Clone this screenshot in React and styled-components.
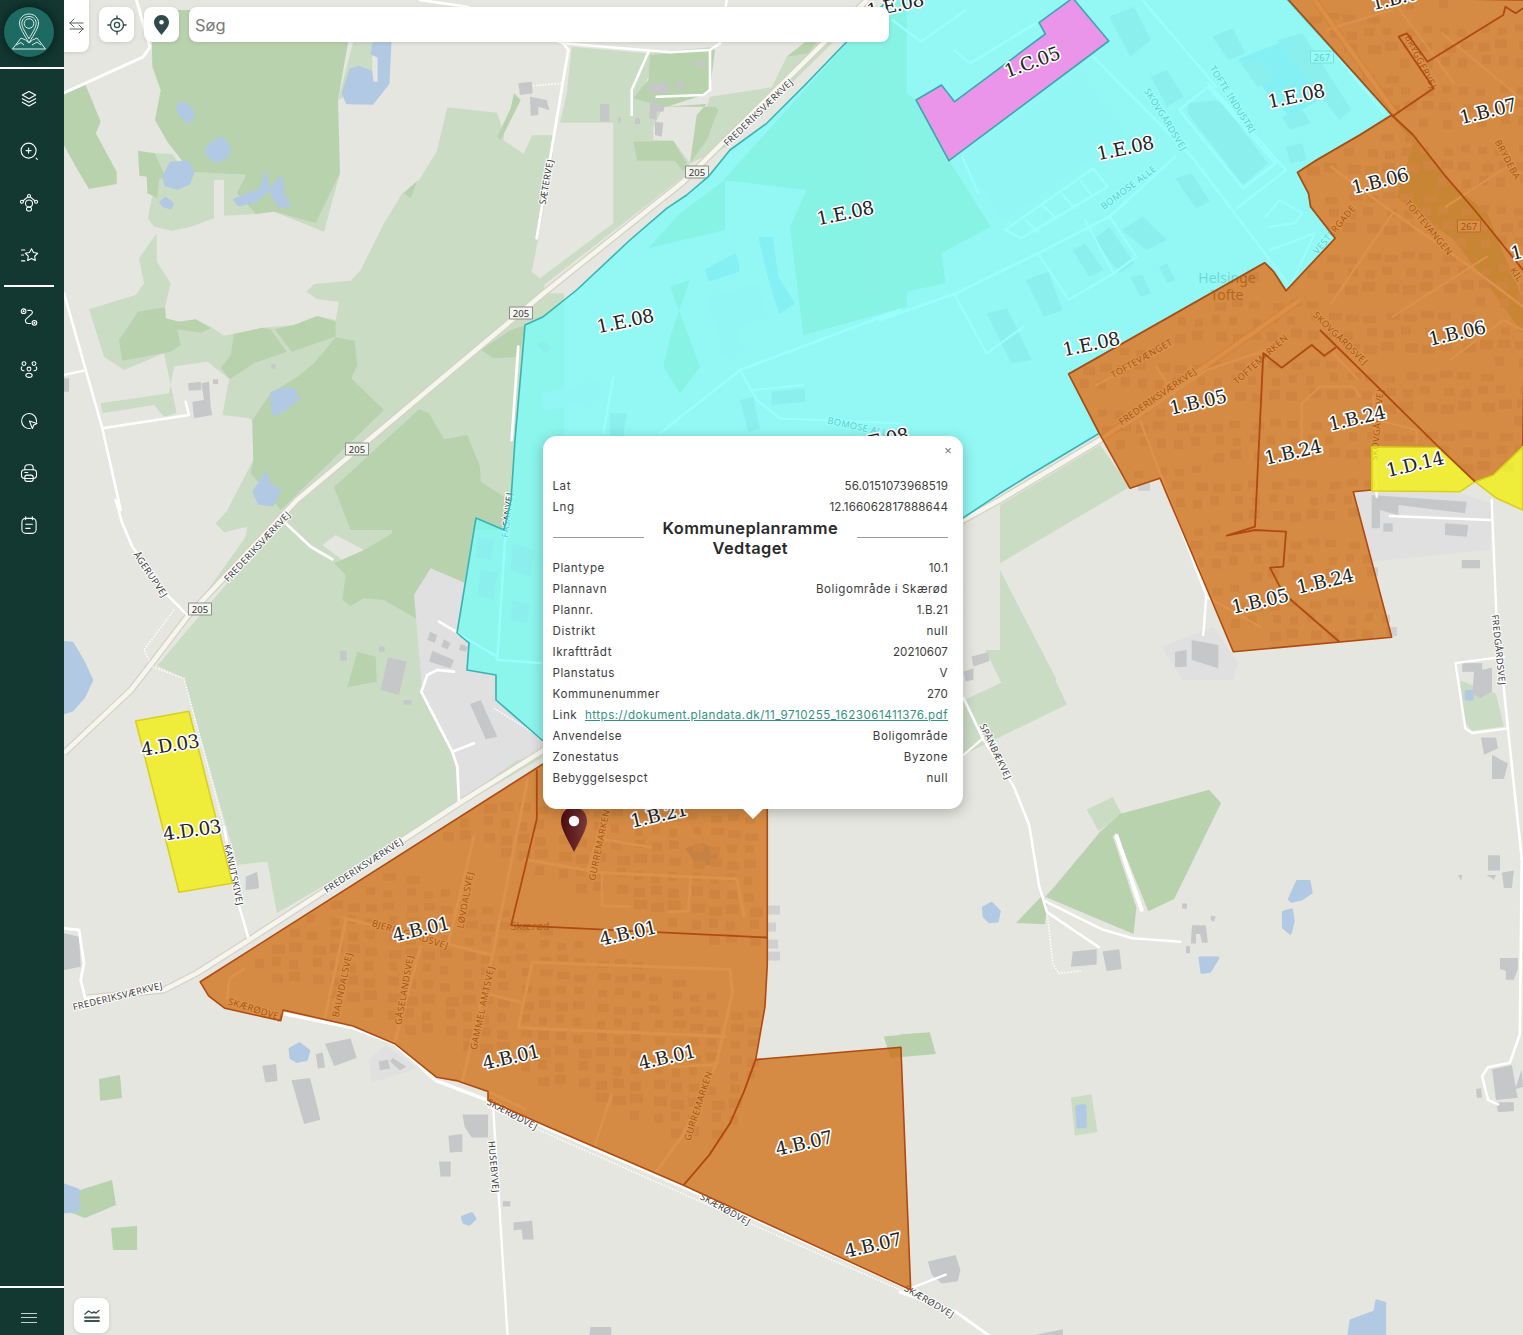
import React from "react";
import styled, { createGlobalStyle } from "styled-components";

const conv = (ox, oy, sx, sy) => (s) =>
  s.trim().split(/\s+/).map((p) => {
    const [x, y] = p.split(",").map(Number);
    return `${(ox + x * sx).toFixed(1)},${(oy + y * sy).toFixed(1)}`;
  }).join(" ");
const t = 1 / 3;
const z5 = conv(880, 0, 643 / 1568, t);
const z6 = conv(1000, 330, t, t);
const z7 = conv(400, 0, t, t);
const z8 = conv(64, 30, t, t);
const z9 = conv(64, 500, t, t);
const z10 = conv(190, 780, 730 / 1568, 555 / 1568);
const z11 = conv(900, 650, 623 / 1568, 685 / 1568);

const GlobalStyle = createGlobalStyle`
  html, body { margin: 0; padding: 0; height: 100%; background: #e5e6e0; overflow: hidden; }
  #root { height: 100%; }
  * { box-sizing: border-box; }
`;

const Shell = styled.div`
  display: flex;
  width: 100%;
  height: 1335px;
  font-family: "Inter", "Noto Sans", sans-serif;
`;
const Sidebar = styled.aside`
  flex: 0 0 64px;
  display: flex;
  flex-direction: column;
  background: #123831;
  position: relative;
  z-index: 2;
`;
const LogoBar = styled.div`
  height: 67px;
  display: flex;
  align-items: flex-start;
  padding: 7px 0 0 4px;
`;
const LogoDisc = styled.div`
  width: 50px;
  height: 50px;
  border-radius: 50%;
  background: #1c6a62;
  box-shadow: 0 0 12px rgba(0, 0, 0, 0.55);
  display: flex;
  align-items: center;
  justify-content: center;
`;
const Rule = styled.hr`
  border: 0;
  margin: 0;
  height: 2px;
  background: #fff;
  flex: none;
`;
const ShortRule = styled(Rule)`
  width: 50px;
  margin-left: 4px;
`;
const NavGroup = styled.nav`
  display: flex;
  flex-direction: column;
  padding: ${(p) => p.$pad};
`;
const NavItem = styled.button`
  width: 58px;
  height: 52px;
  border: 0;
  padding: 0;
  background: transparent;
  display: flex;
  align-items: center;
  justify-content: center;
  color: #fff;
`;
const Foot = styled.div`
  margin-top: auto;
`;
const MenuRow = styled.div`
  height: 47px;
  padding: 25px 0 0 21px;
`;
const MenuLines = styled.div`
  width: 16px;
  height: 10px;
  border-top: 1.5px solid #c6d2cf;
  border-bottom: 1.5px solid #c6d2cf;
  position: relative;
  &::after {
    content: "";
    position: absolute;
    left: 0;
    right: 0;
    top: 2.8px;
    height: 1.5px;
    background: #c6d2cf;
  }
`;
const MapArea = styled.main`
  flex: 1;
  position: relative;
  overflow: hidden;
`;
const MapCanvas = styled.svg`
  display: block;
  width: 100%;
  height: 100%;
  polygon, polyline, rect, ellipse { vector-effect: non-scaling-stroke; }
`;
const Land = styled.rect`fill: #e5e6e0;`;
const ForestLight = styled.polygon`fill: #cbdcc5;`;
const ForestDark = styled.polygon`fill: #b9d2ae;`;
const LandPatch = styled.polygon`fill: #e5e6e0;`;
const Residential = styled.polygon`fill: #e0e0e0;`;
const Water = styled.polygon`
  fill: #b2c9e3;
  stroke: #b2c9e3;
  stroke-width: 3;
  stroke-linejoin: round;
`;
const Building = styled.polygon`fill: #c6c7c9;`;
const Block = styled.rect`fill: #d0d0d2;`;
const Road = styled.polyline`
  fill: none;
  stroke: #fff;
  stroke-width: ${(p) => p.$w || 3};
  stroke-linejoin: round;
  stroke-linecap: round;
`;
const PathDots = styled.polyline`
  fill: none;
  stroke: #fff;
  stroke-width: 1.4;
  stroke-dasharray: 1.5 1.5;
`;
const MajorCase = styled.polyline`
  fill: none;
  stroke: #d3d2c5;
  stroke-width: 7;
  stroke-linejoin: round;
`;
const MajorRoad = styled.polyline`
  fill: none;
  stroke: #f7f6ee;
  stroke-width: 4.5;
  stroke-linejoin: round;
`;
const RoadName = styled.text`
  font-family: "Noto Sans", "DejaVu Sans", sans-serif;
  font-size: 9.3px;
  letter-spacing: 0.35px;
  fill: #3c3c3c;
  stroke: #fff;
  stroke-width: 2px;
  paint-order: stroke;
  text-anchor: middle;
  dominant-baseline: middle;
`;
const PlaceName = styled.text`
  font-family: "Noto Sans", "DejaVu Sans", sans-serif;
  font-size: ${(p) => p.$size || 14}px;
  fill: #6e6e6e;
  text-anchor: middle;
`;
const ShieldBox = styled.rect`
  fill: #f5f5f0;
  stroke: #8d8d8d;
  stroke-width: 1;
`;
const ShieldText = styled.text`
  font-family: "Noto Sans", "DejaVu Sans", sans-serif;
  font-size: 9.5px;
  fill: #333;
  text-anchor: middle;
  dominant-baseline: central;
`;
const ZoneFill = styled.polygon`
  fill: ${(p) => p.$fill};
  stroke: ${(p) => p.$line};
  stroke-width: 1.6;
  stroke-linejoin: round;
`;
const ZoneEdge = styled.polyline`
  fill: none;
  stroke: #b04a10;
  stroke-width: 1.8;
  stroke-linejoin: round;
`;
const ZoneName = styled.text`
  font-family: "DejaVu Serif", "Liberation Serif", serif;
  font-size: 18.5px;
  letter-spacing: -0.5px;
  fill: #222;
  stroke: #fff;
  stroke-width: 3.4px;
  stroke-linejoin: round;
  paint-order: stroke;
  text-anchor: middle;
  dominant-baseline: central;
`;
const Toolbar = styled.div`
  position: absolute;
  top: 0;
  left: 0;
  display: flex;
  align-items: flex-start;
  gap: 10px;
`;
const SwapTab = styled.button`
  width: 25px;
  height: 52px;
  border: 0;
  padding: 0;
  background: #fff;
  border-radius: 0 0 8px 0;
  box-shadow: 0 1px 4px rgba(0, 0, 0, 0.12);
  display: flex;
  align-items: center;
  justify-content: center;
  color: #54605e;
`;
const ToolButton = styled.button`
  width: 35px;
  height: 35px;
  margin-top: 7px;
  border: 0;
  padding: 0;
  background: #fff;
  border-radius: 8px;
  box-shadow: 0 1px 4px rgba(0, 0, 0, 0.12);
  display: flex;
  align-items: center;
  justify-content: center;
  color: #2f4a48;
`;
const Search = styled.input`
  width: 700px;
  height: 35px;
  margin-top: 7px;
  border: 0;
  outline: 0;
  padding: 0 6px;
  background: #fff;
  border-radius: 8px;
  box-shadow: 0 1px 4px rgba(0, 0, 0, 0.12);
  font-family: "Inter", "Noto Sans", sans-serif;
  font-size: 16.5px;
  &::placeholder { color: #7a7a7a; opacity: 1; }
`;
const LegendButton = styled(ToolButton)`
  position: absolute;
  left: 10px;
  bottom: 2px;
  margin: 0;
`;
const Pin = styled.svg`
  position: absolute;
  left: 496px;
  top: 806px;
`;
const Popup = styled.section`
  position: absolute;
  left: 478.5px;
  top: 436px;
  width: 420.5px;
  height: 373px;
  padding: 39.5px 15px 20px 10px;
  background: #fff;
  border-radius: 14px;
  box-shadow: 0 3px 14px rgba(0, 0, 0, 0.25);
  color: #3c3c3c;
  font-size: 11.6px;
  letter-spacing: 0.55px;
  &::after {
    content: "";
    position: absolute;
    left: 200px;
    bottom: -10px;
    border-left: 10px solid transparent;
    border-right: 10px solid transparent;
    border-top: 10px solid #fff;
  }
`;
const Close = styled.button`
  position: absolute;
  top: 8px;
  right: 9px;
  width: 12px;
  height: 14px;
  border: 0;
  padding: 0;
  background: none;
  color: #777;
  font: 400 13px/14px "Liberation Sans", sans-serif;
`;
const Row = styled.div`
  display: flex;
  justify-content: space-between;
  height: 21px;
  line-height: 21px;
  white-space: nowrap;
`;
const Value = styled.span`
  letter-spacing: ${(p) => (p.$num ? "0.1px" : "inherit")};
`;
const TitleRow = styled.div`
  display: grid;
  grid-template-columns: 91px 1fr 91px;
  align-items: center;
  height: 41px;
  margin-top: -0.5px;
  color: #2a2a2a;
  &::before, &::after {
    content: "";
    height: 1px;
    background: #9a9a9a;
  }
`;
const Title = styled.h3`
  margin: 0;
  font-size: 16.4px;
  line-height: 20px;
  font-weight: 600;
  letter-spacing: 0.4px;
  text-align: center;
  white-space: nowrap;
`;
const DocLink = styled.a`
  color: #34917f;
  text-decoration: underline;
  letter-spacing: 0.5px;
`;

const Icon = ({ children, size = 20, sw = 1.3 }) => (
  <svg width={size} height={size} viewBox="0 0 24 24" fill="none" stroke="currentColor" strokeWidth={sw} strokeLinecap="round" strokeLinejoin="round">
    {children}
  </svg>
);
const navTop = [
  <><path d="M12 3 20 7.3 12 11.6 4 7.3Z" /><path d="M4 11.6 12 16 20 11.6" /><path d="M4 15.8 12 20.3 20 15.8" /></>,
  <><circle cx="11.5" cy="11.5" r="9" /><path d="M11.5 8.5v6M8.5 11.5h6M20.5 20.5l1.5 1.5" /></>,
  <><circle cx="12" cy="3.5" r="1.8" /><circle cx="3.5" cy="10.5" r="1.8" /><circle cx="20.5" cy="10.5" r="1.8" /><path d="M10.6 4.6 5 9.3M13.4 4.6 19 9.3" /><circle cx="12" cy="12.5" r="4.2" /><rect x="9" y="17" width="6" height="4.5" rx="2" /></>,
  <><path d="M15 4.5l2.4 4.6 5 .8-3.6 3.6.8 5.1-4.6-2.4-4.6 2.4.8-5.1-3.6-3.6 5-.8Z" /><path d="M3 6h4M3 12h2.5M3 19h4" /></>,
];
const navBottom = [
  <><circle cx="5.5" cy="5" r="2.8" /><circle cx="5.5" cy="5" r=".6" /><circle cx="18.5" cy="19" r="2.8" /><circle cx="18.5" cy="19" r=".6" /><path d="M10.5 4h3a2.5 2.5 0 0 1 1.8 4.3L9 14a3.2 3.2 0 0 0 2 5.8h3" /></>,
  <><circle cx="6" cy="5.5" r="2.3" /><circle cx="18" cy="5.5" r="2.3" /><circle cx="12" cy="12" r="2.3" /><path d="M3.5 9.5C1.5 11.5 3 14 6 14M20.5 9.5c2 2 .5 4.5-2.500 4.500" /><ellipse cx="12" cy="19.5" rx="3.800" ry="2.500" /></>,
  <><path d="M12 3a9 9 0 1 0 1.500 17.900" /><path d="M12 3a9 9 0 0 1 9 9v1.500" /><path d="M12.500 12l9 3-3.800 1.800-1.700 4.200Z" /></>,
  <><path d="M7 8V5.500A3.500 3.500 0 0 1 10.500 2h3A3.500 3.500 0 0 1 17 5.500V8" /><rect x="3" y="8" width="18" height="10.500" rx="3.500" /><rect x="7" y="14.500" width="10" height="7.500" rx="2.500" /><path d="M7 11.300h3.500" /></>,
  <><rect x="3.500" y="4" width="17" height="18" rx="4.500" /><path d="M8 2v3.500M16 2v3.500M8 11h8M8 16h5.500" /></>,
];

const Logo = () => (
  <svg width="38" height="40" viewBox="0 0 38 40" fill="none" stroke="#dcebe7" strokeWidth="1" strokeLinejoin="round">
    <path d="M19 2c-6.500 0-9.500 5-9.500 9 0 5 4.500 11 9.500 20 5-9 9.500-15 9.500-20 0-4-3-9-9.500-9Z" />
    <path d="M19 4.500c-5 0-7.200 3.800-7.200 6.800 0 4 3.700 9 7.200 15.500 3.500-6.500 7.200-11.500 7.200-15.500 0-3-2.200-6.800-7.200-6.800Z" />
    <circle cx="19" cy="11.500" r="4.800" />
    <path d="M11 26 2.500 37h33L27 26l-4.500 2-3.500 3-3.500-3Z" />
    <path d="M6 33l5-2.500 3 2.500M22 33l5-3 4 3" />
  </svg>
);

const orangeMain = z10("22,570 770,-55 1240,-55 1240,520 1235,640 1215,790 1190,880 1160,970 1115,1060 1060,1145 770,980 640,905 640,880 575,850 530,840 440,745 350,695 200,650 195,680 75,645 40,610");
const orangeNE =
  z5("990,-10 1248,345 1170,405 1065,480 1018,517 1045,580 1050,620 1110,715 990,872 960,815 938,788 460,1122") + " " +
  z6("298,310 390,475 480,445 580,680 700,965 1175,922 1060,485 1115,480 1115,350 1315,352 1425,455 1480,435 1568,350") +
  " 1530,0";
const cyanZone =
  z7("375,975 430,950 530,870 690,720 800,625 860,585 925,530 990,450 1100,370 1220,250 1340,125 1470,-6") + " " +
  z5("990,-6 1248,345 1170,405 1065,480 1018,517 1045,580 1050,620 1110,715 990,872 960,815 938,788 460,1122") + " " +
  z6("298,310 80,440 0,490") + " 600,760 542,740 496,700 496,675 467,670 469,643 457,633 476,518 504,530 511,500 515,440";

const toPts = (s) => s.split(" ").map((p) => p.split(",").map(Number));
const inside = (pt, poly) => {
  let c = false;
  for (let i = 0, j = poly.length - 1; i < poly.length; j = i++) {
    const [xi, yi] = poly[i], [xj, yj] = poly[j];
    if (yi > pt[1] !== yj > pt[1] && pt[0] < ((xj - xi) * (pt[1] - yi)) / (yj - yi) + xi) c = !c;
  }
  return c;
};
const makeBlocks = (poly, x0, y0, x1, y1, dx, dy, slope) => {
  const out = [];
  const pts = toPts(poly);
  let n = 0;
  for (let y = y0; y < y1; y += dy) {
    for (let x = x0; x < x1; x += dx) {
      n++;
      const h = (n * 2654435761) % 97;
      if (h % 4 === 0) continue;
      const bx = x + (h % 7) - 3;
      const by = y + (h % 5) - 2 + (x - x0) * slope;
      if (inside([bx, by], pts)) out.push({ x: bx, y: by, w: 8 + (h % 6), h: 6 + (h % 4) });
    }
  }
  return out;
};
const blocksA = makeBlocks(orangeMain, 215, 790, 770, 1180, 19, 15, 0.05);
const blocksB = makeBlocks(orangeNE, 1080, -10, 1523, 650, 19, 15, -0.02);

const lightForest = [
  z8("1150,232 1300,248 1325,330 1378,372 1405,316 1470,316 1440,790 1340,868 680,1440 490,1440 568,1290 565,1170 555,1165 475,1155 495,1047 430,995 330,1010 315,1090 110,1120 115,1150 270,1125 300,1160 338,1150 300,970 180,1020 120,980 75,838 215,795 240,760 225,685 278,610 278,695 320,760 303,832 305,865 345,875 395,868 440,890 480,917 515,910 596,893 690,885 760,858 815,870 825,815 760,808 727,785 750,762 860,752 890,720 960,580 1015,490 1065,450 1118,365"),
  z8("270,370 325,372 345,400 390,425 546,435 518,490 575,552 480,557 480,450 450,450 450,565 380,590 325,602 270,590 252,565 262,510 285,450 300,430"),
  z8("869,30 925,36 925,160 822,210"),
  z8("828,430 780,605 630,545 755,580"),
  z8("1440,790 1500,790 1500,1440 680,1440"),
  z9("280,497 700,0 1440,0 1440,770 638,1240 610,1085 520,1095 360,535"),
  z9("455,70 520,0 640,0 660,40 410,300 545,110 550,80 480,97"),
  z7("480,368 500,280 515,140 740,160 945,140 925,280 800,320 915,315 880,360 870,490 850,530 400,880"),
  z7("930,290 1115,262 1160,170 1215,127 1300,127 980,440 870,490"),
  z6("0,525 300,345 390,470 0,700"),
  z6("0,720 170,1050 0,1050"),
  z11("215,0 355,0 420,125 160,240 160,115 255,75"),
  z11("470,365 535,337 558,375 500,415"),
  z11("430,1025 482,1017 497,1103 440,1112"),
  z11("1410,70 1500,100 1520,175 1440,185 1420,165"),
];
const landPatches = [
  z7("480,368 640,368 640,670 420,835 395,815 415,715"),
  z7("790,320 915,312 890,350 895,395 870,490 820,422 760,420 760,380"),
  z7("765,195 805,250 825,235 925,235 925,265 908,285 770,285 730,260"),
  z7("340,260 490,240 480,370 460,405 395,405 370,460 310,420 335,330"),
  z9("775,135 815,105 900,150 868,205"),
  z8("330,1010 430,995 495,1047 475,1155 370,1160 338,1150"),
  z9("520,1095 610,1085 638,1240 555,1310 525,1230"),
];
const darkForest = [
  z8("262,-60 869,-60 822,210 828,430 755,580 630,545 575,552 518,490 546,435 380,425 310,335 273,270 290,180 265,110"),
  z8("0,190 65,165 110,275 95,310 158,425 158,462 75,477 35,410 0,345"),
  z8("222,362 272,370 305,440 285,450 280,505 250,490 248,440 226,437"),
  z8("165,930 222,845 303,832 305,865 345,875 395,868 440,895 410,908 340,898 350,945 320,965 175,992"),
  z8("510,912 596,893 620,898 668,965 570,1000 498,1047 470,1015 500,975"),
  z8("632,898 690,885 760,858 815,875 815,920 683,965"),
  z8("815,922 872,932 880,1005 862,1045 960,1140 650,1440 560,1330 568,1290 565,1170 620,1090 700,1040 750,1000"),
  z8("1250,960 1340,900 1385,885 1365,980 1290,985"),
  z8("1065,1138 1095,1150 1140,1228 1210,1215 1248,1310 1250,1355 1320,1400 1320,1500 860,1500 810,1372"),
  z8("1020,490 1060,452 1040,505"),
  z8("1300,320 1340,235 1350,190 1370,210 1340,270 1310,330"),
  z9("880,0 1340,0 1320,60 1240,55 1200,250 1100,210 1050,285 1100,335 1080,370 960,300 900,295 860,318 835,300 845,225 810,190 900,150 985,100 975,30"),
  z9("880,455 935,470 938,545 850,562"),
  z7("700,425 820,422 860,490 850,515 825,482 712,482"),
  z7("750,165 945,150 930,265 908,285 800,320 945,320 955,330 920,420 870,490 890,345 920,312 790,320 700,295 745,240"),
  z7("1160,170 1215,127 1250,127 1225,160"),
  z7("970,540 1340,130 1520,-20 1520,920 1210,1005 1170,680 1220,570"),
  z7("745,745 975,690 975,540 840,640"),
  z7("810,860 870,840 810,1010 790,1100 840,1180 900,1100"),
  z5("-30,200 88,300 168,480 270,680 150,760 160,850 -30,900"),
  z5("1250,350 1300,400 1385,540 1480,640 1568,900 1568,1000 1480,850 1400,720 1260,590 1300,430"),
  z10("1490,725 1568,715 1568,775 1505,785"),
  z11("505,415 555,375 778,320 808,350 865,362 808,350 690,570 625,598 548,425 535,425 595,590 588,650 365,565 390,540"),
  z11("355,565 292,625 365,628 370,580"),
  z11("0,880 75,875 90,925 0,932"),
  "99,1079 120,1075 122,1098 100,1101",
  "64,1195 112,1180 116,1205 85,1218 64,1210",
  "111,1228 137,1226 137,1250 113,1250",
];
const residential = [
  z9("1050,285 1100,205 1205,250 1180,400 1215,430 1210,510 1295,525 1295,600 1435,720 1435,770 1360,780 1190,900 1170,760 1075,570"),
  z6("1065,485 1380,490 1475,520 1470,660 1115,695"),
  z6("485,950 640,890 715,1000 700,1050 550,1050"),
  z10("385,790 420,750 490,815 390,855"),
  z5("200,470 490,225 600,400 300,665"),
  z7("920,890 1075,850 1100,950 1010,980 1030,1050 970,1070"),
  z7("420,1180 600,1140 605,1195 430,1235"),
];
const ponds = [
  z8("340,225 365,220 385,245 385,270 370,275 345,250"),
  z8("428,355 470,322 497,350 490,380 460,395 430,375"),
  z8("300,440 320,400 370,395 387,425 375,460 340,475 305,465"),
  z8("290,518 305,505 325,522 320,533 300,528"),
  z8("838,190 860,120 885,112 920,125 925,160 945,160 945,80 925,70 930,36 978,36 972,160 925,220 850,218"),
  z8("512,510 560,490 590,480 605,430 612,480 580,510 525,525"),
  z8("620,480 650,440 660,500 677,525 650,530 630,505"),
  z8("622,1090 660,1075 690,1080 702,1105 660,1140 630,1155"),
  z8("570,1385 605,1330 615,1365 648,1380 625,1425 585,1420"),
  z9("-20,425 25,430 55,480 83,540 60,590 25,630 -20,645"),
  z10("215,760 235,745 255,765 250,790 230,795 217,785"),
  z10("585,1235 605,1225 612,1240 600,1255 588,1250"),
  z10("1068,195 1100,182 1135,205 1125,235 1090,237"),
  z11("980,570 1000,530 1030,530 1035,555 1010,570 985,575"),
  z11("965,600 985,595 990,620 982,648 965,635"),
  z11("210,590 230,580 250,598 245,620 225,622 212,610"),
  z11("755,705 800,705 780,735 760,738"),
  z11("1125,1600 1135,1535 1195,1515 1200,1490 1220,1495 1220,1600"),
  z11("445,1045 465,1043 467,1090 448,1092"),
  z11("1425,95 1440,95 1440,112 1425,112"),
  z7("920,810 1005,765 1015,810 930,840"),
  z7("1080,715 1115,715 1130,830 1180,910 1140,935 1110,840"),
  "1240,60 1290,40 1325,95 1290,115",
  "64,1185 78,1190 78,1210 64,1212",
];
const buildings = [
  z7("355,250 395,245 398,280 360,285"), z7("390,290 440,300 448,330 415,320 415,345 392,348"),
  z7("600,312 628,312 628,365 600,365"), z7("750,250 805,250 805,280 750,280"), z7("828,245 850,245 850,265 828,265"),
  z7("885,183 915,183 915,198 885,198"), z7("750,305 795,315 790,335 770,335 770,360 748,355"),
  z7("765,365 790,368 785,410 765,405"), z7("705,355 720,355 720,372 705,372"), z7("655,350 662,350 662,368 655,368"),
  z8("372,1060 410,1055 412,1080 375,1082"), z8("412,1060 435,1055 440,1130 445,1155 390,1165 385,1115 420,1110"),
  z8("0,1045 15,1045 15,1085 0,1085"), z8("447,1048 462,1048 462,1062 447,1062"), z8("622,1003 634,1003 634,1016 622,1016"),
  z9("828,452 848,452 848,482 828,482"), z9("972,472 1028,485 1005,585 950,570"), z9("945,440 962,440 962,455 945,455"), z9("1018,600 1042,600 1042,614 1018,614"),
  z9("1098,395 1120,405 1112,428 1090,420"), z9("1140,418 1160,430 1150,448 1132,440"), z9("1190,432 1212,440 1205,455 1185,450"),
  z9("1105,452 1170,480 1160,505 1095,485"), z9("1218,612 1250,600 1300,710 1265,718"),
  z9("545,1130 580,1115 585,1165 545,1170"), z9("0,1300 45,1310 50,1400 0,1410"),
  z9("1240,110 1290,120 1280,180 1235,170"), z9("1345,300 1400,315 1390,370 1340,360"), z9("1250,210 1300,220 1290,300 1240,285"), z9("1345,130 1410,150 1400,230 1340,210"),
  z10("218,848 258,842 280,960 245,972"), z10("155,808 185,802 188,850 162,855"),
  z10("290,745 345,730 358,785 310,808"), z10("270,775 285,770 290,812 275,815"),
  z10("405,795 425,790 430,815 408,820"), z10("435,785 465,810 450,820 430,795"),
  z10("585,945 640,945 640,1010 605,1010 590,980"), z10("555,1005 585,1000 585,1050 558,1052"), z10("535,1078 560,1078 560,1120 538,1120"),
  z10("672,1190 688,1190 688,1205 672,1205"), z10("695,1250 735,1245 738,1298 715,1298 712,1270 695,1272"),
  z10("860,1545 905,1545 905,1568 858,1568"),
  z6("525,965 560,960 560,1010 525,1012"), z6("575,930 655,945 655,1015 575,990"),
  z6("1115,495 1400,515 1395,550 1195,525 1195,555 1140,540 1140,595 1115,595"),
  z6("1150,580 1178,580 1178,605 1150,605"), z6("1335,580 1405,585 1400,620 1335,615"), z6("1385,690 1440,690 1440,715 1385,715"),
  z11("735,630 770,630 775,670 760,670 755,650 745,650 745,672 732,672"), z11("435,690 495,685 495,720 430,725"), z11("510,690 552,685 558,730 520,735"),
  z11("710,580 722,580 722,592 710,592"), z11("783,608 795,610 790,622 782,618"), z11("720,678 730,678 730,694 720,694"),
  z11("1480,470 1510,470 1510,505 1480,505"), z11("1476,515 1500,515 1495,525"), z11("1515,510 1545,505 1540,545 1520,545"), z11("1405,515 1415,515 1412,528"),
  z11("1510,705 1555,705 1555,730 1545,755 1525,755 1525,735 1510,730"),
  z11("1490,960 1540,950 1550,1000 1565,960 1568,1000 1550,1005 1555,1025 1500,1030"), z11("1500,1035 1545,1035 1545,1055 1505,1058"), z11("1450,1005 1462,1003 1465,1025 1452,1025"),
  z11("1462,200 1500,200 1505,225 1470,240"), z11("1490,240 1530,260 1520,295 1490,295"),
  z11("1415,30 1465,30 1465,50 1415,50"), z11("1445,50 1490,40 1490,95 1460,110 1440,100"),
  z11("70,1400 140,1385 152,1420 145,1445 105,1450 80,1430"), z11("340,1568 410,1555 410,1568"),
  z11("180,15 222,5 225,25 185,38"), z11("160,50 185,42 185,68 165,72"),
  z5("750,310 830,300 945,490 885,555 750,340"), z5("560,50 620,20 660,120 610,170"), z5("660,230 700,210 740,290 700,320"),
  z5("810,110 860,85 890,160 850,180"), z5("590,690 640,650 700,720 650,750"), z5("520,720 560,680 620,790 585,820"),
  z5("470,750 500,730 545,810 510,830"), z5("355,840 410,815 445,930 400,950"), z5("260,940 310,925 370,1080 320,1090"),
  z5("680,800 700,790 720,840 700,850"), z5("610,830 640,825 660,880 635,890"), z5("720,535 760,520 805,605 770,625"),
  z5("880,190 925,180 960,240 920,260"), z5("980,350 1030,330 1050,370 1000,390"), z5("990,440 1030,430 1040,480 1000,490"),
  z5("970,120 1030,100 1150,330 1120,360"),
  z7("1020,1200 1060,1190 1080,1285 1045,1295"), z7("1115,1175 1215,1165 1215,1205 1115,1215"),
  z7("630,1240 680,1240 670,1310 630,1310"), z7("410,1035 430,1022 455,1045 440,1060"),
];
const roads = [
  [ "64,93 143,57 150,47 135,-5", 3 ],
  [ z8("0,790 115,1195 170,1440"), 2.6 ], [ z9("155,0 175,70 205,140 310,285 370,345"), 2.6 ],
  [ z8("0,1035 60,1022"), 2.2 ], [ z8("115,1195 375,1155 365,1115"), 2.6 ],
  [ z7("505,150 410,715"), 2.8 ], [ z7("60,0 200,20 490,130 810,157 930,150 960,130 980,0"), 2.6 ],
  [ z7("490,130 505,150"), 2.6 ], [ z7("745,157 695,270 695,345"), 2.6 ], [ z7("930,150 930,270 910,285 770,290"), 2.6 ],
  [ z7("355,1040 335,1320"), 2.8 ],
  [ z9("665,70 740,140 805,178"), 2.8 ], [ z9("1125,365 1185,400"), 2.6 ],
  [ z9("1325,90 1300,480 1440,490"), 2.4 ], [ z9("1180,400 1300,470"), 2.4 ],
  [ z9("1170,515 1120,510 1090,525 1072,575 1165,755 1180,800 1185,905"), 2.8 ], [ z9("1165,755 1230,730"), 2.6 ],
  [ z9("480,980 520,1200 555,1320"), 2.6 ], [ z9("0,1285 45,1290 60,1390 50,1440 65,1500"), 2.8 ],
  [ z7("780,1300 1020,1110 1500,930"), 2.6 ], [ z7("1020,1110 1070,1200 1140,1255 1500,1270"), 2.2 ], [ z7("640,1130 610,1300"), 2.2 ], [ z7("1060,1170 1210,1155"), 2 ],
  [ z5("30,60 100,125 210,30"), 2.2 ], [ z5("180,150 220,190 380,70"), 2.2 ],
  [ z6("585,680 620,780 610,915"), 2.6 ], [ z6("1170,558 1470,570"), 2.6 ], [ z6("1475,510 1490,880"), 2.4 ],
  [ z11("160,110 210,205 285,310 325,400 350,540 370,600 500,680"), 2.6 ],
  [ z11("365,575 510,640 585,660 705,668"), 2.6 ], [ z11("160,240 205,205"), 2.2 ],
  [ z11("1505,0 1520,90 1545,310 1565,480 1560,880 1535,945 1480,955 1465,975 1480,1030 1505,1040"), 2.6 ],
  [ z11("1520,15 1398,30 1423,180 1440,190 1525,180"), 2.4 ], [ z11("30,1460 115,1430"), 2.4 ],
  [ z11("0,1470 140,1515 240,1580"), 3 ],
  [ z11("545,425 608,595"), 4 ],
  [ z10("200,660 350,700 440,745 530,850 640,905 770,985 1060,1150 1550,1440 1568,1450"), 3.4 ],
  [ z10("650,900 682,1568"), 2.4 ],
  [ z10("330,390 650,495"), 3 ], [ z10("585,850 650,495 725,0"), 3 ], [ z10("555,460 610,160"), 3 ], [ z10("440,740 495,470"), 3 ], [ z10("290,670 335,395"), 3 ],
  [ z10("735,515 1160,535 1165,600 1130,805 1060,1000 1000,1110"), 3 ], [ z10("735,515 705,700 1150,725"), 3 ], [ z10("640,605 710,628"), 3 ], [ z10("1130,805 1030,810"), 2.6 ],
  [ z10("870,1030 905,890"), 2.6 ], [ z10("720,225 885,262 1175,280 1190,385"), 3 ], [ z10("885,262 885,355 945,358"), 2.6 ], [ z10("1075,280 1070,370 1030,372"), 2.6 ],
  [ z10("875,165 855,250"), 2.6 ], [ z10("875,165 990,190"), 2.6 ], [ z10("80,620 85,560 115,535"), 2.6 ], [ z10("640,880 720,930"), 2.6 ],
  [ z5("520,170 760,470 1000,860"), 2.4 ], [ z5("800,260 730,330 885,565 965,490 800,260"), 2.4 ], [ z5("870,625 990,510 800,250"), 2.4 ],
  [ z5("640,0 820,260"), 2.4 ], [ z5("0,960 185,880 385,760 560,650 720,470"), 2.6 ], [ z5("305,690 520,505 555,560 345,715 305,690"), 2.2 ],
  [ z5("355,660 385,695"), 2 ], [ z5("400,620 430,655"), 2 ], [ z5("445,585 475,625"), 2 ], [ z5("490,545 515,585"), 2 ],
  [ z5("385,760 460,900 570,820 500,660"), 2.2 ], [ z5("180,880 260,1060 350,980"), 2.2 ], [ z5("570,820 625,770 560,650"), 2.2 ],
  [ z5("200,470 240,580"), 2 ], [ z5("950,750 1060,700 1000,860"), 2 ], [ z5("940,650 975,600 1030,640 1010,670 950,680"), 2 ],
  [ z5("1000,0 1230,340"), 2.6 ], [ z5("1250,0 1400,250"), 2 ], [ z5("1090,90 1140,70 1250,30"), 2 ], [ z5("1370,100 1568,300"), 2 ],
  [ z5("1100,500 1220,610 1450,810 1568,920"), 2.4 ], [ z5("1250,640 1100,910"), 2.2 ], [ z5("1380,620 1530,500"), 2 ], [ z5("1250,950 1480,770"), 2 ], [ z5("1390,1080 1520,960 1568,990"), 2 ],
  [ z6("290,165 520,45"), 2.4 ], [ z6("370,290 620,120 800,60"), 2.4 ], [ z6("420,270 620,800 780,890"), 2.4 ], [ z6("470,110 530,210"), 2 ],
  [ z6("905,220 960,170 1060,170 1080,200"), 2.2 ], [ z6("1000,70 1075,150"), 2.2 ], [ z6("905,220 905,360"), 2.2 ], [ z6("1130,270 1250,300 1250,340"), 2 ], [ z6("1120,200 1130,500"), 2.4 ],
];
const dotted = [
  z9("330,330 240,450 265,500 360,535 480,980"), z9("1290,625 1435,715"),
  z7("400,257 485,250"), z11("370,600 385,720 400,740 455,735"),
  z10("640,925 1060,1170 1550,1455"),
];
const majors = [
  "64,753 131,690 152,663 187,617 297,500 544,293 683,182 867,0",
  "87,998 164,990 197,973 249,940 461,802 544,750 1000,500 1100,440 1300,300",
  z5("1060,0 1260,345"),
];
const roadNames = [
  ["FREDERIKSVÆRKVEJ", 759, 113, -44], ["SÆTERVEJ", 547, 182, -80], ["FREDERIKSVÆRKVEJ", 258, 547, -47], ["ÅGERUPVEJ", 150, 575, 56],
  ["FASANVEJ", 508, 515, -84], ["KANUTSKIVEJ", 233, 875, 78], ["FREDERIKSVÆRKVEJ", 364, 866, -33], ["FREDERIKSVÆRKVEJ", 118, 997, -14],
  ["SKÆRØDVEJ", 255, 1010, 17], ["BAUNDALSVEJ", 343, 985, -78], ["GÅSELANDSVEJ", 405, 990, -80], ["LØVDALSVEJ", 466, 900, -80],
  ["GAMMEL AMTSVEJ", 483, 1008, -78], ["GURREMARKEN", 699, 1106, -72], ["SKÆRØDVEJ", 512, 1115, 28], ["HUSEBYVEJ", 493, 1167, 85],
  ["SKÆRØDVEJ", 725, 1210, 29], ["SKÆRØDVEJ", 929, 1302, 30], ["SPÅNBÆKVEJ", 995, 752, 64], ["FREDGÅRDSVEJ", 1498, 650, 84],
  ["TOFTEVÆNGET", 1142, 359, -30], ["FREDERIKSVÆRKVEJ", 1158, 397, -35], ["TOFTEMARKEN", 1261, 360, -42], ["SKOVGÅRDSVEJ", 1340, 339, 44],
  ["SKOVGÅRDSVEJ", 1165, 120, 58], ["BOMOSE ALLE", 1129, 188, -37], ["TOFTE INDUSTRI", 1232, 100, 58], ["VESTERGADE", 1335, 230, -50],
  ["TOFTEVANGEN", 1428, 228, 50], ["BRYGGERVEJ", 1420, 62, 63], ["BRYDEBA", 1507, 160, 62], ["BOMOSE ALLE", 860, 428, 12],
  ["SKOVGÅRDSVEJ", 1378, 425, -85], ["GURREMARKEN", 600, 845, -78], ["BJERREGÅRDSVEJ", 410, 935, 17], ["KIL", 1516, 275, 55],
];
const shields = [["205", 697, 172], ["205", 521, 313], ["205", 357, 449], ["205", 200, 609], ["267", 1322, 57], ["267", 1469, 226]];
const zoneNames = [
  ["1.C.05", 1032, 62, -20], ["1.E.08", 1296, 96, -12], ["1.E.08", 1125, 148, -12], ["1.E.08", 845, 213, -12], ["1.E.08", 625, 321, -12],
  ["1.E.08", 1091, 344, -12], ["1.E.08", 895, 5, -12], ["1.E.08", 880, 440, -12], ["1.B.06", 1380, 181, -14], ["1.B.07", 1488, 111, -14], ["1.B.06", 1457, 333, -13],
  ["1.B.07", 1400, -3, -14], ["1.B.05", 1198, 402, -13], ["1.B.24", 1293, 452, -13], ["1.B.24", 1357, 418, -13], ["1.D.14", 1415, 464, -13],
  ["1.B.05", 1260, 601, -13], ["1.B.24", 1325, 581, -13], ["1.B.21", 659, 815, -13], ["4.D.03", 170, 745, -9], ["4.D.03", 192, 830, -8],
  ["4.B.01", 421, 929, -13], ["4.B.01", 628, 933, -13], ["4.B.01", 511, 1057, -13], ["4.B.01", 667, 1057, -13], ["4.B.07", 804, 1143, -13], ["4.B.07", 873, 1245, -13],
  ["1.", 1519, 252, -14],
];
const rows = [
  ["Plantype", "10.1"], ["Plannavn", "Boligområde i Skærød"], ["Plannr.", "1.B.21"], ["Distrikt", "null"], ["Ikrafttrådt", "20210607"],
  ["Planstatus", "V"], ["Kommunenummer", "270"],
  ["Link", <DocLink href="#">https://dokument.plandata.dk/11_9710255_1623061411376.pdf</DocLink>],
  ["Anvendelse", "Boligområde"], ["Zonestatus", "Byzone"], ["Bebyggelsespct", "null"],
];
const ORANGE = "rgba(206,100,0,.7)";
const YELLOW = "rgba(240,237,21,.82)";
const isNum = (v) => typeof v === "string" && /^[\d.B]+$/.test(v);

export default function App() {
  return (
    <Shell>
      <GlobalStyle />
      <Sidebar>
        <LogoBar><LogoDisc><Logo /></LogoDisc></LogoBar>
        <Rule />
        <NavGroup $pad="4px 0 4px">
          {navTop.map((ic, i) => <NavItem key={i}><Icon>{ic}</Icon></NavItem>)}
        </NavGroup>
        <ShortRule />
        <NavGroup $pad="4px 0 0">
          {navBottom.map((ic, i) => <NavItem key={i}><Icon>{ic}</Icon></NavItem>)}
        </NavGroup>
        <Foot>
          <Rule />
          <MenuRow><MenuLines /></MenuRow>
        </Foot>
      </Sidebar>
      <MapArea>
        <MapCanvas viewBox="64 0 1459 1335">
          <Land x="64" y="0" width="1459" height="1335" />
          {lightForest.map((p, i) => <ForestLight key={i} points={p} />)}
          {landPatches.map((p, i) => <LandPatch key={i} points={p} />)}
          {darkForest.map((p, i) => <ForestDark key={i} points={p} />)}
          {residential.map((p, i) => <Residential key={i} points={p} />)}
          {ponds.map((p, i) => <Water key={i} points={p} />)}
          {buildings.map((p, i) => <Building key={i} points={p} />)}
          {[...blocksA, ...blocksB].map((b, i) => <Block key={i} x={b.x} y={b.y} width={b.w} height={b.h} />)}
          {majors.map((p, i) => <MajorCase key={i} points={p} />)}
          {roads.map(([p, w], i) => <Road key={i} points={p} $w={w} />)}
          {dotted.map((p, i) => <PathDots key={i} points={p} />)}
          {majors.map((p, i) => <MajorRoad key={i} points={p} />)}
          {roadNames.map(([s, x, y, a], i) => <RoadName key={i} x={x} y={y} transform={`rotate(${a} ${x} ${y})`}>{s}</RoadName>)}
          {shields.map(([s, x, y], i) => (
            <g key={i}>
              <ShieldBox x={x - 11.5} y={y - 6} width="23" height="12" />
              <ShieldText x={x} y={y}>{s}</ShieldText>
            </g>
          ))}
          <PlaceName x="1227" y="283">Helsinge</PlaceName>
          <PlaceName x="1227" y="300">Tofte</PlaceName>
          <PlaceName x="530" y="930" $size={11}>Skærød</PlaceName>

          <ZoneFill points={cyanZone} $fill="rgba(115,255,251,.72)" $line="#36b4b4" />
          <ZoneFill points={z5("470,-6 558,123 168,482 88,300 150,255 182,305 403,102 388,68")} $fill="rgba(242,140,232,.92)" $line="#3aa8ac" />
          <ZoneFill points={orangeNE} $fill={ORANGE} $line="#b04a10" />
          <ZoneFill points={orangeMain} $fill={ORANGE} $line="#b04a10" />
          <ZoneFill points={z10("1215,790 1527,755 1548,1440 1060,1145 1115,1060 1160,970 1190,880")} $fill={ORANGE} $line="#b04a10" />
          <ZoneFill points={z6("1115,350 1315,352 1425,455 1380,485 1115,483")} $fill={YELLOW} $line="#d8d020" />
          <ZoneFill points={z6("1425,455 1480,435 1568,350 1568,540 1490,505")} $fill={YELLOW} $line="#d8d020" />
          <ZoneFill points={z9("215,663 375,634 505,1150 345,1177")} $fill={YELLOW} $line="#d8d020" />

          <ZoneEdge points={z5("1248,345 1300,405 1380,530 1450,630 1568,810")} />
          <ZoneEdge points={z5("1248,350 1350,265 1265,110 1285,100 1335,185 1520,45 1525,20 1550,40 1568,25")} />
          <ZoneEdge points={z6("960,0 1315,350 1425,455")} />
          <ZoneEdge points={z6("1008,52 973,77 935,45 845,113 790,70 765,590 680,617 765,600 858,605 850,710 810,713 850,790 1018,935")} />
          <ZoneEdge points={z10("745,-30 745,110 690,410 1240,445")} />
          {zoneNames.map(([s, x, y, a], i) => <ZoneName key={i} x={x} y={y} transform={`rotate(${a} ${x} ${y})`}>{s}</ZoneName>)}
        </MapCanvas>

        <Pin width="28" height="48" viewBox="0 0 28 48">
          <defs>
            <linearGradient id="pinfill" x1="0" y1="0" x2="1" y2="0">
              <stop offset="0" stopColor="#4d0c0f" />
              <stop offset="1" stopColor="#7a3a38" />
            </linearGradient>
          </defs>
          <path d="M14 1C6.500 1 1 7 1 15c0 8 7 19 13 31 6-12 13-23 13-31C27 7 21.500 1 14 1Z" fill="url(#pinfill)" />
          <circle cx="14" cy="15" r="5.200" fill="#fff" />
        </Pin>

        <Popup>
          <Close aria-label="Luk">×</Close>
          <Row><span>Lat</span><Value $num>56.0151073968519</Value></Row>
          <Row><span>Lng</span><Value $num>12.166062817888644</Value></Row>
          <TitleRow><Title>Kommuneplanramme<br />Vedtaget</Title></TitleRow>
          {rows.map(([k, v]) => <Row key={k}><span>{k}</span><Value $num={isNum(v)}>{v}</Value></Row>)}
        </Popup>

        <Toolbar>
          <SwapTab>
            <svg width="15" height="16" viewBox="0 0 15 16" fill="none" stroke="currentColor" strokeWidth="1" strokeLinecap="round" strokeLinejoin="round">
              <path d="M14 5H1M1 5l4-4M1 5l4 4M1 11h13M14 11l-4-4M14 11l-4 4" />
            </svg>
          </SwapTab>
          <ToolButton>
            <svg width="20" height="20" viewBox="0 0 20 20" fill="none" stroke="currentColor" strokeWidth="1.300" strokeLinecap="round">
              <circle cx="10" cy="10" r="6.500" />
              <circle cx="10" cy="10" r="2.600" />
              <path d="M10 .8v2.700M10 16.500v2.700M.8 10h2.700M16.500 10h2.700" />
            </svg>
          </ToolButton>
          <ToolButton>
            <svg width="15" height="20" viewBox="0 0 15 20">
              <path d="M7.500 0C3.300 0 0 3.300 0 7.300 0 11.500 4 15.500 7.500 20 11 15.500 15 11.500 15 7.300 15 3.300 11.700 0 7.500 0Z" fill="currentColor" />
              <circle cx="7.500" cy="7.200" r="2.200" fill="#fff" />
            </svg>
          </ToolButton>
          <Search placeholder="Søg" />
        </Toolbar>
        <LegendButton>
          <svg width="16" height="14" viewBox="0 0 16 14" fill="none" stroke="#3d5250" strokeWidth="1.400" strokeLinecap="round" strokeLinejoin="round">
            <path d="M1 5l3.500-3 3.500 2 2-1 2 1 3-2.500" />
            <path d="M1 8.500h14M1 12h14" strokeWidth="1.800" />
          </svg>
        </LegendButton>
      </MapArea>
    </Shell>
  );
}
